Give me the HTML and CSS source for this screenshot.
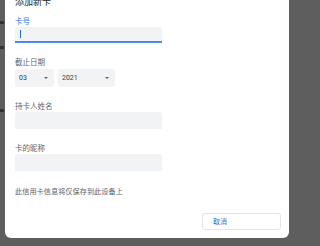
FILE: index.html
```html
<!DOCTYPE html>
<html lang="zh-CN">
<head>
<meta charset="utf-8">
<link rel="stylesheet" href="styles.css">
</head>
<body>
<div class="page">
  <span class="mark m1"></span>
  <span class="mark m2"></span>
  <span class="mark m3"></span>
</div>
<div class="dialog">
  <div class="title">添加新卡</div>
  <div class="label active">卡号</div>
  <div class="input focused"><span class="caret"></span></div>
  <div class="label l-date">截止日期</div>
  <div class="selects">
    <div class="select s-month"><span>03</span><span class="arrow"></span></div>
    <div class="select s-year"><span>2021</span><span class="arrow"></span></div>
  </div>
  <div class="label l-name">持卡人姓名</div>
  <div class="input"></div>
  <div class="label l-nick">卡的昵称</div>
  <div class="input"></div>
  <div class="note">此信用卡信息将仅保存到此设备上</div>
  <div class="actions">
    <div class="btn">取消</div>
  </div>
</div>
</body>
</html>
```

FILE: styles.css
```css
html, body {
  margin: 0;
  padding: 0;
}
body {
  width: 300px;
  height: 246px;
  overflow: hidden;
  background: #5e5e5e;
  font-family: "Noto Sans CJK SC", "Noto Sans", sans-serif;
  position: relative;
}
.page {
  width: 5px;
  height: 246px;
  position: relative;
}
.mark {
  position: absolute;
  left: 0;
  width: 4px;
  height: 3px;
  background: #333;
}
.m1 { top: 21px; }
.m2 { top: 46px; }
.m3 { top: 109px; }
.dialog {
  position: absolute;
  left: 5px;
  top: -14px;
  width: 284px;
  height: 252px;
  background: #fff;
  border-radius: 0 0 6px 6px;
  box-sizing: border-box;
  padding: 0 0 0 10px;
  display: flex;
  flex-direction: column;
}
.title {
  font-size: 9px;
  line-height: 12px;
  color: #202124;
  margin-top: 10px;
}
.label {
  font-size: 7.5px;
  line-height: 9px;
  color: #5f6368;
}
.label.active {
  color: #1a73e8;
  margin-top: 8px;
}
.input {
  width: 147px;
  height: 17px;
  background: #f1f3f4;
  border-radius: 3px 3px 0 0;
  margin-top: 2px;
  box-sizing: border-box;
  position: relative;
}
.input.focused {
  border-bottom: 2px solid #4a8ae8;
  height: 16px;
}
.caret {
  position: absolute;
  left: 5px;
  top: 3px;
  width: 1px;
  height: 8px;
  background: #1a73e8;
}
.l-date { margin-top: 14px; }
.l-name { margin-top: 14px; }
.l-nick { margin-top: 14px; }
.selects {
  display: flex;
  gap: 4px;
  margin-top: 3px;
}
.select {
  height: 18px;
  background: #f1f3f4;
  border-radius: 3px;
  display: flex;
  align-items: center;
  justify-content: space-between;
  box-sizing: border-box;
  padding: 0 6px 0 4px;
  font-family: "Roboto", "Noto Sans", sans-serif;
  font-size: 7px;
  color: #3c4043;
}
.s-month { width: 39px; }
.s-year { width: 57px; }
.arrow {
  width: 0;
  height: 0;
  border-left: 2.5px solid transparent;
  border-right: 2.5px solid transparent;
  border-top: 2.5px solid #5f6368;
}
.note {
  font-size: 7.2px;
  line-height: 9px;
  color: #5f6368;
  margin-top: 16px;
}
.actions {
  display: flex;
  justify-content: flex-end;
  padding-right: 8px;
  margin-top: 17px;
}
.btn {
  width: 79px;
  height: 17px;
  box-sizing: border-box;
  border: 1px solid #e3e5e8;
  border-radius: 3px;
  font-size: 7px;
  line-height: 15px;
  color: #1a73e8;
  padding-left: 10px;
}
```
